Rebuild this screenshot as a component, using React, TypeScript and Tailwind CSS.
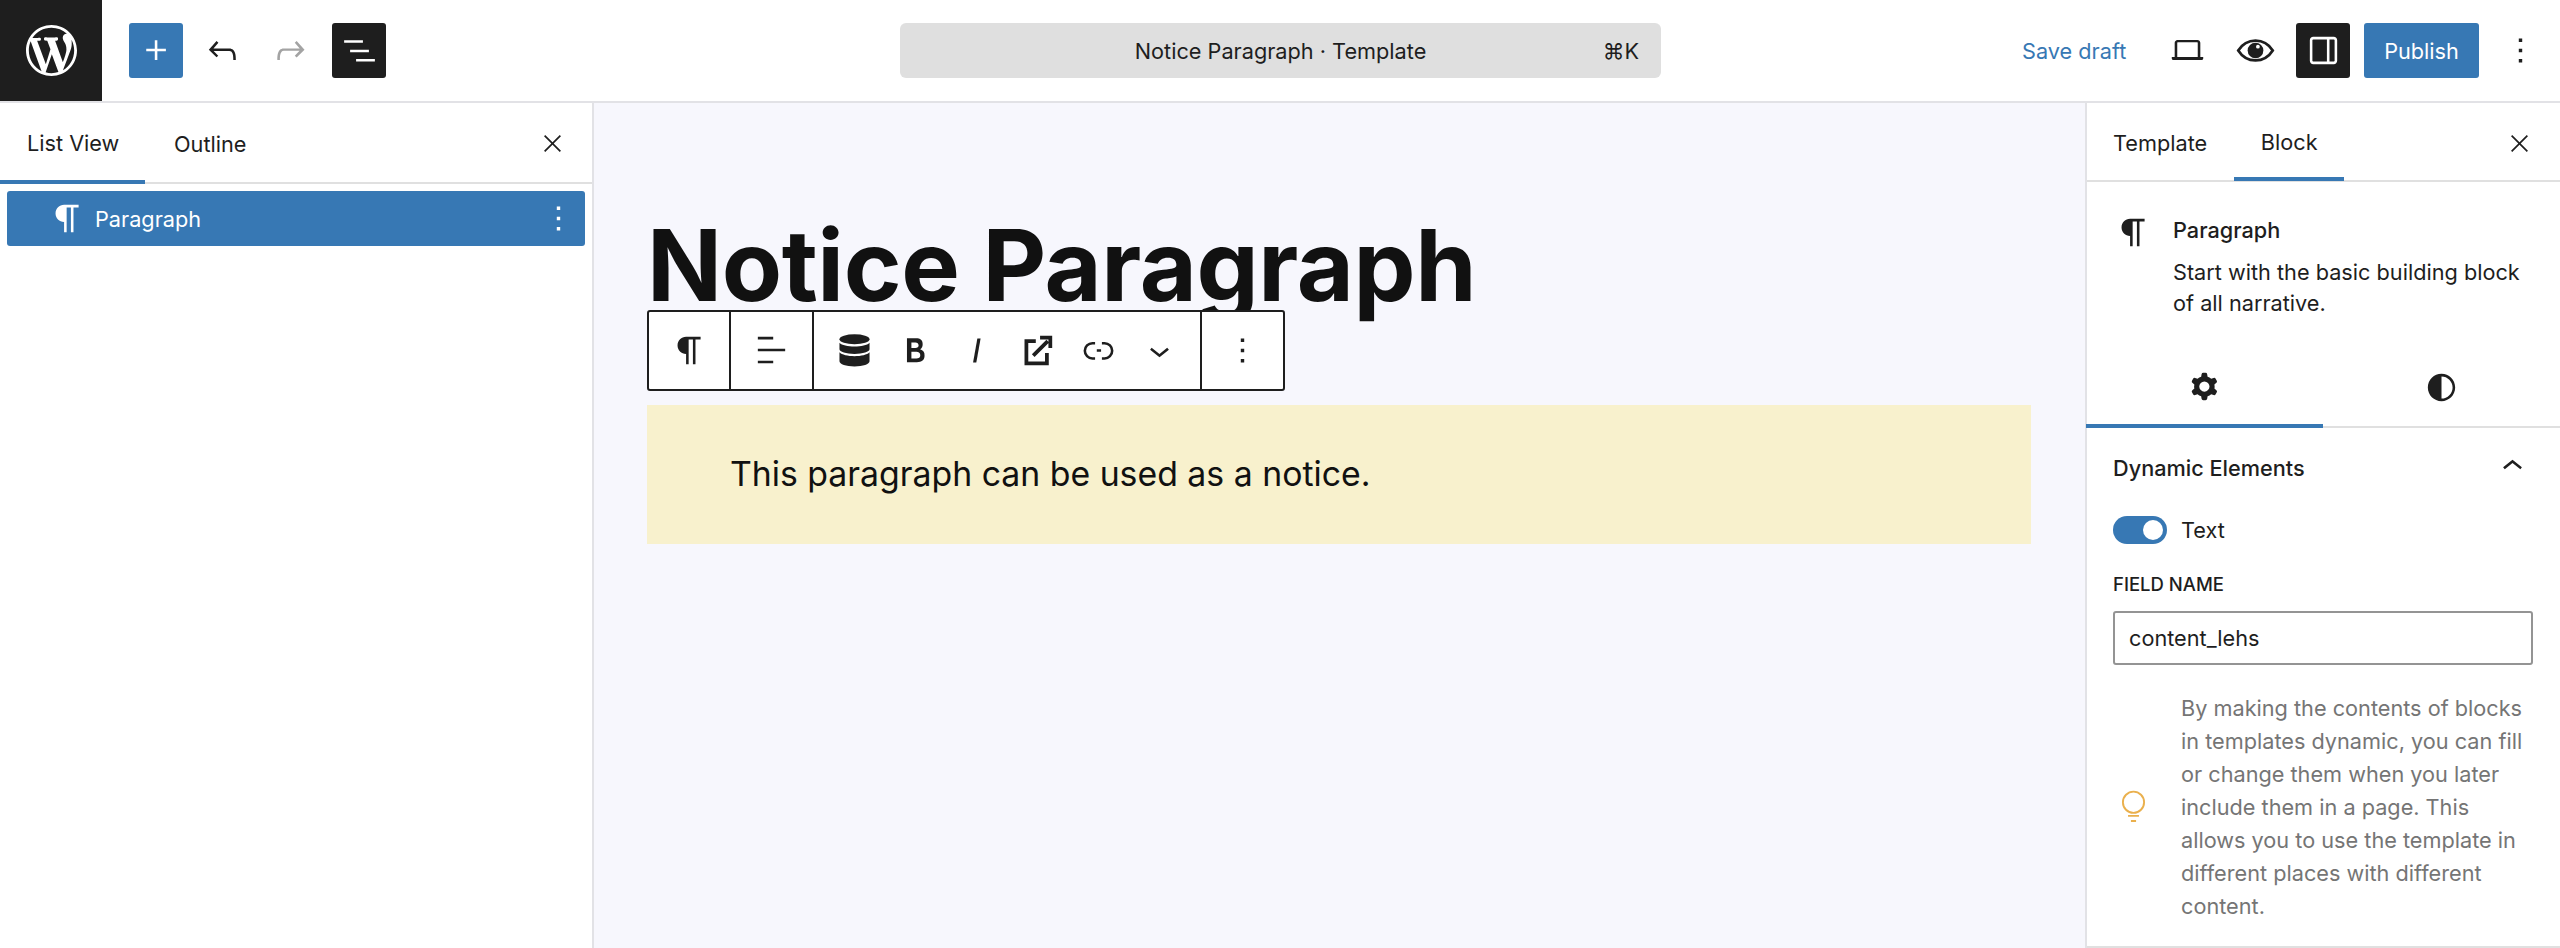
import type { ReactNode } from 'react';

const paths = {
  plus: 'M11 12.5V17.5H12.5V12.5H17.5V11H12.5V6H11V11H6V12.5H11Z',
  undo: 'M18.3 11.7c-.6-.6-1.4-.9-2.3-.9H6.7l2.9-3.3-1.1-1-4.5 5L8.5 16l1-1-2.7-2.7H16c.5 0 .9.2 1.3.5 1 1 1 3.4 1 4.5v.3h1.5v-.2c0-1.5 0-4.3-1.5-5.7z',
  redo: 'M15.6 6.5l-1.1 1 2.9 3.3H8c-.9 0-1.7.3-2.3.9-1.4 1.5-1.4 4.2-1.4 5.6v.2h1.5v-.3c0-1.1 0-3.5 1-4.5.3-.3.7-.5 1.3-.5h9.2L14.5 15l1.1 1.1 4.6-4.6-4.6-5z',
  listView: 'M3 6h11v1.5H3V6Zm3.5 5.5h11V13h-11v-1.5ZM21 17H10v1.5h11V17Z',
  alignLeft: 'M13 5.5H4V4h9v1.5Zm7 7H4V11h16v1.5Zm-7 7H4V18h9v1.5Z',
  close: 'm13.06 12 6.47-6.47-1.06-1.06L12 10.94 5.53 4.47 4.47 5.53 10.94 12l-6.47 6.47 1.06 1.06L12 13.06l6.47 6.47 1.06-1.06L13.06 12Z',
  paragraph: 'm9.99609 14v-.2251l.00391.0001v6.225h1.5v-14.5h2.5v14.5h1.5v-14.5h3v-1.5h-8.50391c-2.76142 0-5 2.23858-5 5 0 2.7614 2.23858 5 5 5z',
  more: 'M13 19h-2v-2h2v2zm0-6h-2v-2h2v2zm0-6h-2V5h2v2z',
  drawer: 'M18 4H6c-1.1 0-2 .9-2 2v12c0 1.1.9 2 2 2h12c1.1 0 2-.9 2-2V6c0-1.1-.9-2-2-2zm-4 14.5H6c-.3 0-.5-.2-.5-.5V6c0-.3.2-.5.5-.5h8v13zm4.5-.5c0 .3-.2.5-.5.5h-2.5v-13H18c.3 0 .5.2.5.5v12z',
  laptop: 'M19.5 15.8V7.5c0-1-.8-1.7-1.7-1.7H6.2c-1 0-1.7.8-1.7 1.7v8.3H2.8v.9c0 .5.4.9.9.9h16.6c.5 0 .9-.4.9-.9v-.9h-1.7zM6 7.5c0-.2.1-.3.3-.3h11.4c.2 0 .3.1.3.3v8.3H6V7.5z',
  link: 'M10 17.389H8.444A5.194 5.194 0 1 1 8.444 7H10v1.5H8.444a3.694 3.694 0 0 0 0 7.389H10v1.5ZM14 7h1.556a5.194 5.194 0 0 1 0 10.39H14v-1.5h1.556a3.694 3.694 0 0 0 0-7.39H14V7Zm-3 5.7h2.5v-1.5H11v1.5Z',
  chevronDown: 'M17.5 11.6L12 16l-5.5-4.4.9-1.2L12 14l4.5-3.6 1 1.2z',
  chevronUp: 'M6.5 12.4L12 8l5.5 4.4-.9 1.2L12 10l-4.5 3.6-1-1.2z',
  bold: 'M14.7 11.3c1-.6 1.5-1.6 1.5-3 0-2.3-1.3-3.4-4-3.4H7v14h5.8c1.4 0 2.5-.3 3.3-1 .8-.7 1.2-1.7 1.2-2.9.1-1.9-.8-3.1-2.6-3.7zm-5.1-4h2.3c.6 0 1.1.1 1.4.4.3.3.5.7.5 1.2s-.2 1-.5 1.2c-.3.3-.8.4-1.4.4H9.6V7.3zm4.6 9c-.4.3-1 .4-1.7.4H9.6v-3.9h2.9c.7 0 1.3.2 1.7.5.4.3.6.8.6 1.5s-.2 1.2-.6 1.5z',
  italic: 'M12.5 5L10 19h1.9l2.5-14z',
  cog: 'M10.289 4.836A1 1 0 0 1 11.275 4h1.306a1 1 0 0 1 .986.836l.244 1.466c.788.26 1.503.679 2.108 1.218l1.393-.522a1 1 0 0 1 1.216.437l.653 1.13a1 1 0 0 1-.23 1.273l-1.148.944a6.025 6.025 0 0 1 0 2.435l1.149.946a1 1 0 0 1 .23 1.272l-.653 1.13a1 1 0 0 1-1.216.437l-1.394-.522c-.605.54-1.32.958-2.108 1.218l-.244 1.466a1 1 0 0 1-.986.836h-1.306a1 1 0 0 1-.986-.836l-.244-1.466a5.995 5.995 0 0 1-2.108-1.218l-1.394.522a1 1 0 0 1-1.217-.436l-.653-1.131a1 1 0 0 1 .23-1.272l1.149-.946a6.026 6.026 0 0 1 0-2.435l-1.148-.944a1 1 0 0 1-.23-1.272l.653-1.131a1 1 0 0 1 1.217-.437l1.393.522a5.994 5.994 0 0 1 2.108-1.218l.244-1.466ZM14.929 12a3 3 0 1 1-6 0 3 3 0 0 1 6 0Z',
  styles: 'M12 4c-4.4 0-8 3.6-8 8s3.6 8 8 8 8-3.6 8-8-3.6-8-8-8zm0 14.5v-13c3.6 0 6.5 2.9 6.5 6.5s-2.9 6.5-6.5 6.5z',
};

const wpLogo =
  'M20 10c0-5.51-4.49-10-10-10C4.48 0 0 4.49 0 10c0 5.52 4.48 10 10 10 5.51 0 10-4.48 10-10zM7.78 15.37L4.37 6.22c.55-.02 1.17-.08 1.17-.08.5-.06.44-1.13-.06-1.11 0 0-1.45.11-2.37.11-.18 0-.37 0-.58-.01C4.12 2.69 6.87 1.11 10 1.11c2.33 0 4.45.87 6.05 2.34-.68-.11-1.65.39-1.65 1.58 0 .74.45 1.36.9 2.1.35.61.55 1.36.55 2.46 0 1.49-1.4 5-1.4 5l-3.03-8.37c.54-.02.82-.17.82-.17.5-.05.44-1.25-.06-1.22 0 0-1.44.12-2.38.12-.87 0-2.33-.12-2.33-.12-.5-.03-.56 1.2-.06 1.22l.92.08 1.26 3.41zM17.41 10c.24-.64.74-1.87.43-4.25.7 1.29 1.05 2.71 1.05 4.25 0 3.29-1.73 6.24-4.4 7.78.97-2.59 1.94-5.2 2.92-7.78zM6.1 18.09C3.12 16.65 1.11 13.53 1.11 10c0-1.3.23-2.48.72-3.59C3.25 10.3 4.67 14.2 6.1 18.09zm4.03-6.63l2.58 6.98c-.86.29-1.76.45-2.71.45-.79 0-1.57-.11-2.29-.33.81-2.38 1.62-4.74 2.42-7.1z';

function Icon({ d, className = 'w-[41px] h-[41px]' }: { d: string; className?: string }) {
  return (
    <svg viewBox="0 0 24 24" fill="currentColor" fillRule="evenodd" className={className}>
      <path d={d} />
    </svg>
  );
}

function EyeIcon() {
  return (
    <svg viewBox="0 0 24 24" className="w-[41px] h-[41px]">
      <path d="M1.9 12C4.3 8.2 7.8 6.2 12 6.2s7.7 2 10.1 5.8c-2.400 3.800-5.900 5.800-10.100 5.800S4.300 15.800 1.900 12Z" fill="none" stroke="currentColor" strokeWidth="1.6" />
      <circle cx="12" cy="12" r="4.6" fill="currentColor" />
      <circle cx="13.4" cy="9.8" r="1.1" fill="#fff" />
    </svg>
  );
}

function DatabaseIcon() {
  return (
    <svg viewBox="0 0 24 24" fill="currentColor" className="w-[41px] h-[41px]">
      <ellipse cx="12" cy="5.4" rx="8.8" ry="2.9" />
      <path d="M3.2 7.4v3.900c0 1.500 3.900 2.700 8.800 2.700s8.800-1.200 8.800-2.700V7.400c-1.400 1.500-4.900 2.200-8.800 2.200s-7.400-.7-8.800-2.200Z" />
      <path d="M3.2 13v5.300c0 1.700 3.900 3 8.800 3s8.800-1.300 8.800-3V13c-1.400 1.500-4.900 2.300-8.800 2.300s-7.400-.8-8.800-2.300Z" />
    </svg>
  );
}

function ExternalIcon() {
  return (
    <svg viewBox="0 0 24 24" fill="none" stroke="currentColor" strokeWidth="2.2" className="w-[41px] h-[41px]">
      <path d="M11 6.5H5.500V19.500H17.500V13.500" />
      <path d="M9.500 15L18 6.500M13.500 4.500H19.500V10.500" />
    </svg>
  );
}

function BulbIcon() {
  return (
    <svg viewBox="0 0 24 24" fill="none" stroke="currentColor" strokeWidth="1.1" className="w-[41px] h-[41px]">
      <circle cx="12" cy="9.500" r="6.200" />
      <path d="M8.800 17.500h6.400M10.500 20.500h3" />
    </svg>
  );
}

function ToolbarGroup({ children, className = '' }: { children: ReactNode; className?: string }) {
  return <div className={`flex items-center justify-center h-full ${className}`}>{children}</div>;
}

function TopBar() {
  return (
    <header className="flex items-center h-[103px] shrink-0 bg-white border-b-2 border-[#e2e2e6] text-[21.7px]">
      <div className="flex items-center justify-center w-[102px] h-full bg-[#1e1e1e] text-white">
        <svg viewBox="0 0 20 20" fill="currentColor" className="w-[51px] h-[51px]">
          <path d={wpLogo} />
        </svg>
      </div>
      <button className="ml-[27px] flex items-center justify-center w-[54px] h-[55px] rounded-[3px] bg-[#3778b4] text-white">
        <Icon d={paths.plus} />
      </button>
      <span className="ml-[12px] flex items-center justify-center w-[54px] text-[#1e1e1e]">
        <Icon d={paths.undo} />
      </span>
      <span className="ml-[14px] flex items-center justify-center w-[54px] text-[#a3a3a3]">
        <Icon d={paths.redo} />
      </span>
      <button className="ml-[15px] flex items-center justify-center w-[54px] h-[55px] rounded-[3px] bg-[#1e1e1e] text-white">
        <Icon d={paths.listView} />
      </button>

      <div className="ml-[514px] relative flex items-center justify-center w-[761px] h-[55px] pt-[1px] rounded-[6px] bg-[#dfdfdf] text-[#1e1e1e]">
        <span>Notice Paragraph · Template</span>
        <span className="absolute right-[22px]">⌘K</span>
      </div>

      <span className="ml-[361px] pt-[1px] w-[104px] text-[#3778b4] whitespace-nowrap">Save draft</span>
      <span className="ml-[41px] text-[#1e1e1e]">
        <Icon d={paths.laptop} />
      </span>
      <span className="ml-[27px] text-[#1e1e1e]">
        <EyeIcon />
      </span>
      <button className="ml-[20px] flex items-center justify-center w-[54px] h-[55px] rounded-[3px] bg-[#1e1e1e] text-white">
        <Icon d={paths.drawer} />
      </button>
      <button className="ml-[14px] w-[115px] h-[55px] pt-[1px] rounded-[3px] bg-[#3778b4] text-white">Publish</button>
      <span className="ml-[21px] text-[#1e1e1e]">
        <Icon d={paths.more} />
      </span>
    </header>
  );
}

function ListViewPanel() {
  return (
    <aside className="flex flex-col w-[594px] shrink-0 bg-white border-r-2 border-[#e2e2e6]">
      <div className="flex items-center justify-between h-[81px] shrink-0 border-b-2 border-[#e0e0e0] text-[21.7px] text-[#1e1e1e]">
        <div className="flex h-full">
          <span className="flex items-center w-[145px] pl-[27px] pt-[3px] border-b-4 border-[#3778b4] -mb-[2px]">List View</span>
          <span className="flex items-center ml-[29px] pt-[3px]">Outline</span>
        </div>
        <span className="mr-[26px] mt-[1px]">
          <Icon d={paths.close} className="w-[27px] h-[27px]" />
        </span>
      </div>
      <div className="flex items-center justify-between mx-[7px] mt-[7px] h-[55px] rounded-[3px] bg-[#3778b4] text-white text-[21.7px]">
        <div className="flex items-center">
          <span className="ml-[40px]">
            <Icon d={paths.paragraph} />
          </span>
          <span className="ml-[7px] pt-[2px]">Paragraph</span>
        </div>
        <span className="mr-[6px]">
          <Icon d={paths.more} />
        </span>
      </div>
    </aside>
  );
}

function Canvas() {
  return (
    <main className="flex-1 min-w-0 pl-[53px] pr-[54px] bg-[#f7f7fd]">
      <h1 className="h-[207px] pt-[103px] text-[98.5px] leading-[120px] font-bold tracking-[-0.4px] text-[#111111] font-['Inter',sans-serif] whitespace-nowrap">
        Notice Paragraph
      </h1>
      <div className="relative flex items-center w-[638px] h-[81px] rounded-[3px] border-2 border-[#1e1e1e] bg-white text-[#1e1e1e]">
        <ToolbarGroup className="w-[82px] border-r-2 border-[#1e1e1e]">
          <Icon d={paths.paragraph} />
        </ToolbarGroup>
        <ToolbarGroup className="w-[83px] border-r-2 border-[#1e1e1e]">
          <Icon d={paths.alignLeft} />
        </ToolbarGroup>
        <ToolbarGroup className="w-[388px] border-r-2 border-[#1e1e1e] gap-[20px]">
          <DatabaseIcon />
          <Icon d={paths.bold} />
          <Icon d={paths.italic} />
          <ExternalIcon />
          <Icon d={paths.link} />
          <Icon d={paths.chevronDown} />
        </ToolbarGroup>
        <ToolbarGroup className="flex-1">
          <Icon d={paths.more} />
        </ToolbarGroup>
      </div>
      <p className="mt-[14px] flex items-center h-[139px] pl-[83px] bg-[#f8f1cd] text-[33.8px] text-[#111111]">
        This paragraph can be used as a notice.
      </p>
    </main>
  );
}

function SettingsPanel() {
  return (
    <aside className="flex flex-col w-[475px] shrink-0 bg-white border-l-2 border-[#e2e2e6] text-[21.7px] text-[#1e1e1e]">
      <div className="flex items-center h-[79px] pt-[3px] shrink-0 border-b-2 border-[#e0e0e0]">
        <span className="ml-[26px]">Template</span>
        <span className="ml-[27px] flex items-center justify-center w-[110px] h-full border-b-4 border-[#3778b4] -mb-[2px]">Block</span>
        <span className="ml-auto mr-[27px]">
          <Icon d={paths.close} className="w-[27px] h-[27px]" />
        </span>
      </div>

      <div className="flex pt-[31px] pl-[27px]">
        <span className="w-[36px] -ml-px mr-[26px] -mt-[1px] h-[41px]">
          <Icon d={paths.paragraph} />
        </span>
        <div className="w-[365px] -ml-[2px] leading-[31px]">
          <p className="font-medium mb-[11px] mt-[2px]">Paragraph</p>
          <p>Start with the basic building block of all narrative.</p>
        </div>
      </div>

      <div className="flex h-[81px] mt-[28px] shrink-0 border-b-2 border-[#e0e0e0]">
        <span className="flex flex-1 items-center justify-center pt-[2px] -ml-[1px] border-b-4 border-[#3778b4] -mb-[2px]">
          <Icon d={paths.cog} />
        </span>
        <span className="flex flex-1 items-center justify-center pt-[2px]">
          <Icon d={paths.styles} />
        </span>
      </div>

      <div className="flex-1 pl-[26px] pr-[27px] border-b-2 border-[#e0e0e0]">
        <div className="flex items-center justify-between h-[80px]">
          <span className="font-medium">Dynamic Elements</span>
          <span className="-mt-[3px]">
            <Icon d={paths.chevronUp} />
          </span>
        </div>
        <div className="flex items-center h-[28px] mt-[8px]">
          <span className="relative w-[54px] h-[28px] rounded-full bg-[#3778b4]">
            <span className="absolute right-[4px] top-[4px] w-[20px] h-[20px] rounded-full bg-white" />
          </span>
          <span className="ml-[14px]">Text</span>
        </div>
        <p className="mt-[28px] text-[18.5px] leading-[24px] font-medium uppercase">Field name</p>
        <div className="flex items-center mt-[15px] w-[420px] h-[54px] pl-[14px] rounded-[3px] border-2 border-[#949494]">content_lehs</div>
        <div className="flex items-center mt-[27px]">
          <span className="text-[#eab04d] w-[41px] mr-[27px] -mt-[2px] shrink-0">
            <BulbIcon />
          </span>
          <p className="w-[350px] leading-[33px] text-[#757575]">
            By making the contents of blocks in templates dynamic, you can fill or change them when you later include them in a page. This allows you to use the template in different places with different content.
          </p>
        </div>
      </div>
    </aside>
  );
}

export default function App() {
  return (
    <div className="flex flex-col h-screen overflow-hidden bg-white font-['Inter','Liberation_Sans',sans-serif]">
      <TopBar />
      <div className="flex flex-1 min-h-0">
        <ListViewPanel />
        <Canvas />
        <SettingsPanel />
      </div>
    </div>
  );
}
